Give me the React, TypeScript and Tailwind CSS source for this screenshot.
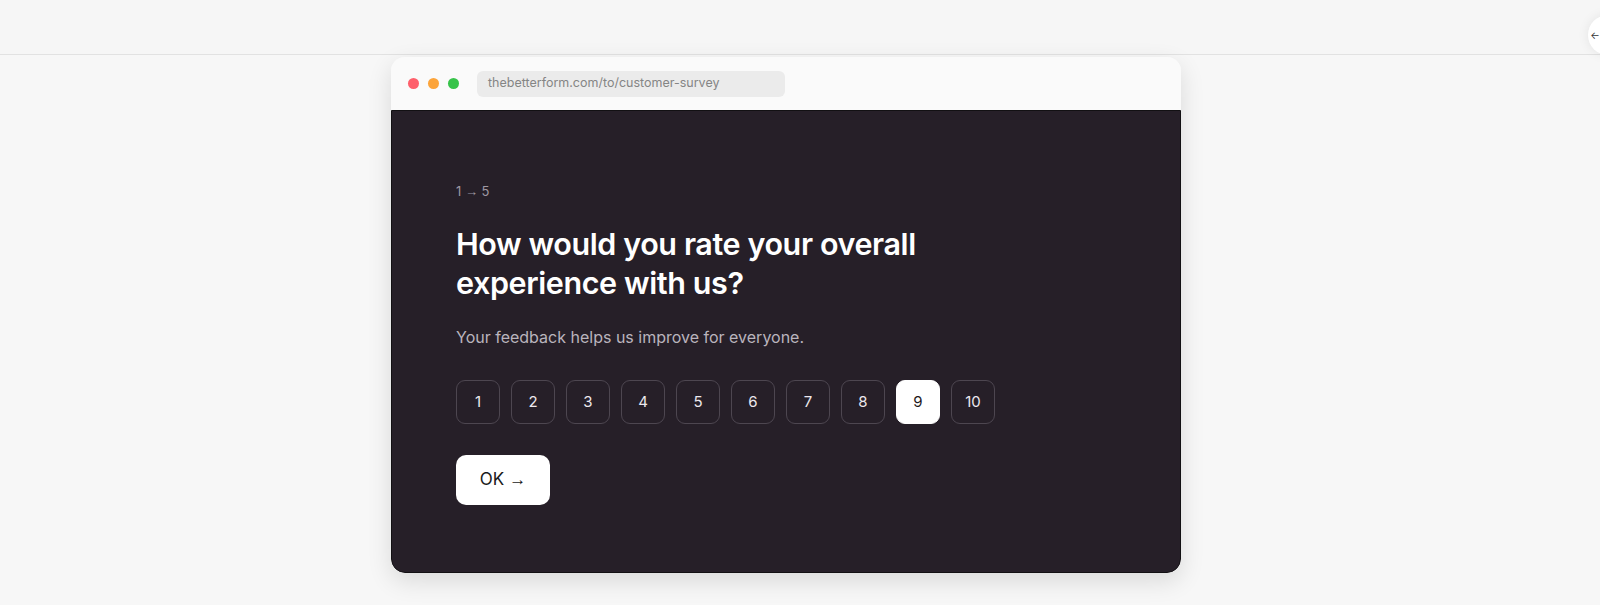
import React from "react";

const ratings = [1, 2, 3, 4, 5, 6, 7, 8, 9, 10];

const font = { fontFamily: "Inter, 'Noto Sans', sans-serif" };

function Arrow() {
  return <span className="font-['Liberation_Sans',sans-serif]">→</span>;
}

export default function App() {
  return (
    <div className="relative h-[605px] w-full overflow-hidden bg-[#f7f7f7]" style={font}>
      {/* top strip */}
      <div className="h-[55px] border-b border-[#e2e2e2] bg-[#f6f6f6]" />

      {/* floating round button at right edge */}
      <div className="absolute left-[1588px] top-[15px] flex h-[40px] w-[40px] items-center justify-center rounded-full bg-white shadow-[0_0_12px_rgba(0,0,0,0.08)]">
        <span className="-ml-[26px] text-[10px] leading-none text-[#333]">←</span>
      </div>

      {/* browser window */}
      <div className="ml-[391px] mt-[2px] w-[790px] overflow-hidden rounded-[14px] shadow-[0_8px_24px_rgba(0,0,0,0.12)]">
        {/* chrome bar */}
        <div className="flex h-[53px] items-center bg-[#fafafa] pl-[17px]">
          <div className="flex gap-[9px]">
            <span className="h-[11px] w-[11px] rounded-full bg-[#fe5f6b]" />
            <span className="h-[11px] w-[11px] rounded-full bg-[#fca43a]" />
            <span className="h-[11px] w-[11px] rounded-full bg-[#37c34a]" />
          </div>
          <div className="ml-[18px] flex h-[26px] w-[308px] items-center rounded-[6px] bg-[#ebebeb] pl-[11px] text-[12.5px] text-[#858585]">
            thebetterform.com/to/customer-survey
          </div>
        </div>

        {/* survey content */}
        <div className="h-[463px] rounded-b-[14px] border border-[#121013] bg-[#261f28] pl-[64px] pt-[71px]">
          <p className="text-[13px] leading-[18px] text-[#9e98a2]">
            1 <Arrow /> 5
          </p>

          <h1 className="mt-[24px] w-[540px] text-[30.5px] font-semibold leading-[38.5px] tracking-[-0.4px] text-white">
            How would you rate your overall experience with us?
          </h1>

          <p className="mt-[22px] text-[16px] leading-[27px] text-[#bab4bd]">
            Your feedback helps us improve for everyone.
          </p>

          <div className="mt-[29px] flex gap-[11px]">
            {ratings.map((n) =>
              n === 9 ? (
                <div
                  key={n}
                  className="flex h-[44px] w-[44px] items-center justify-center rounded-[9px] border border-white bg-white text-[15px] text-[#1f1a20]"
                >
                  {n}
                </div>
              ) : (
                <div
                  key={n}
                  className="flex h-[44px] w-[44px] items-center justify-center rounded-[9px] border border-[#4d4650] text-[15px] text-[#ece8ee]"
                >
                  {n}
                </div>
              )
            )}
          </div>

          <button className="mt-[31px] flex h-[50px] w-[94px] items-center justify-center gap-[5px] rounded-[10px] bg-white text-[17px] text-[#1a1a1a]">
            OK <Arrow />
          </button>
        </div>
      </div>
    </div>
  );
}
